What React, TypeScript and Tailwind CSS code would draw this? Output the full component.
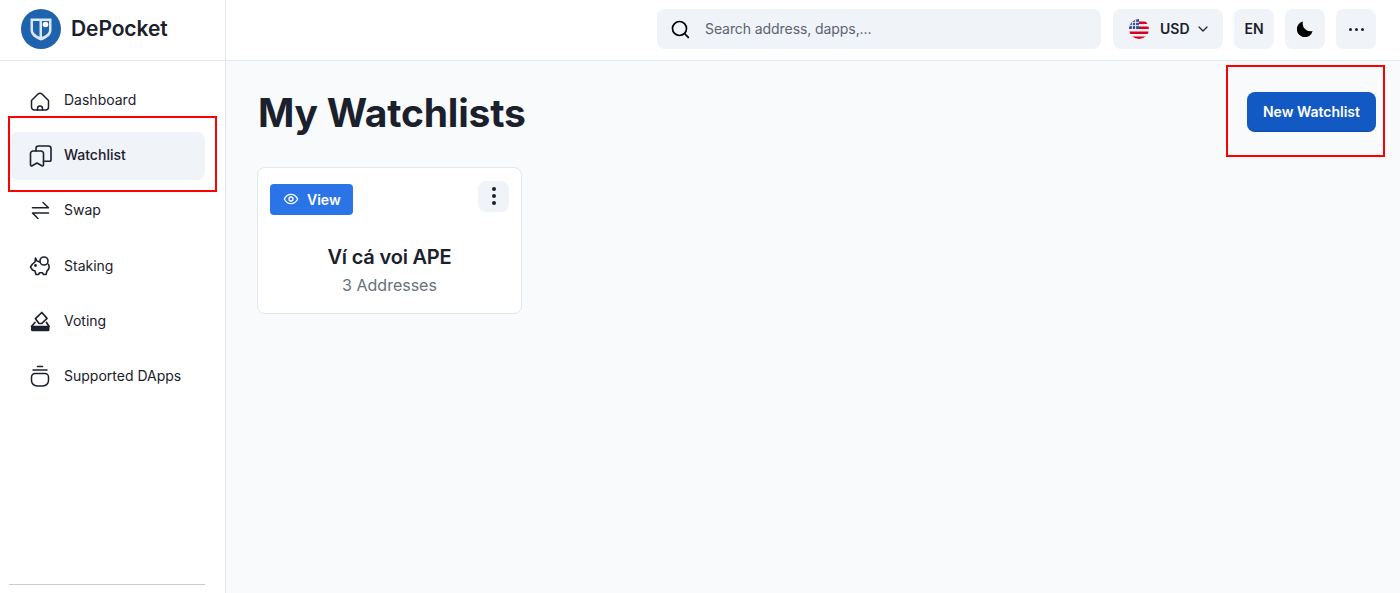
const navItems = [
  { label: "Dashboard", icon: <HomeIcon /> },
  { label: "Watchlist", icon: <BookmarksIcon />, active: true },
  { label: "Swap", icon: <SwapIcon /> },
  { label: "Staking", icon: <PiggyIcon /> },
  { label: "Voting", icon: <VoteIcon /> },
  { label: "Supported DApps", icon: <DappIcon /> },
];

function HomeIcon() {
  return (
    <svg width="24" height="24" viewBox="0 0 24 24" fill="none" stroke="#1a202c" strokeWidth="1.5" strokeLinejoin="round" strokeLinecap="round">
      <path d="M3.500 11.500 10 5a2.800 2.800 0 0 1 4 0l6.500 6.500v6.500a3 3 0 0 1-3 3h-11a3 3 0 0 1-3-3Z" />
      <path d="M9.500 21v-1.500a2.500 2.500 0 0 1 5 0V21" />
    </svg>
  );
}

function BookmarksIcon() {
  return (
    <svg width="24" height="24" viewBox="0 0 24 24" fill="none" stroke="#1a202c" strokeWidth="1.6" strokeLinejoin="round" strokeLinecap="round">
      <path d="M2.500 9.500A2.500 2.500 0 0 1 5 7h8a2.500 2.500 0 0 1 2.500 2.500v11.300c0 1-.9 1.500-1.700 1l-4.800-2.800-4.800 2.800c-.8.5-1.700 0-1.700-1Z" />
      <path d="M8 7V4.500A2.500 2.500 0 0 1 10.500 2h10a2.500 2.500 0 0 1 2.500 2.500v11c0 1-.8 1.800-1.700 1.800h-5.800" />
    </svg>
  );
}

function SwapIcon() {
  return (
    <svg width="24" height="24" viewBox="0 0 24 24" fill="none" stroke="#1a202c" strokeWidth="1.5" strokeLinecap="round" strokeLinejoin="round">
      <path d="M4.500 8.700h16L15 3.500" />
      <path d="M20.500 14H4.500l5.500 5.500" />
    </svg>
  );
}

function PiggyIcon() {
  return (
    <svg width="24" height="24" viewBox="0 0 24 24" fill="none" stroke="#1a202c" strokeWidth="1.600" strokeLinecap="round" strokeLinejoin="round">
      <circle cx="16" cy="7" r="4" />
      <path d="M12 8 9 7 7.500 4 7 8l-2.500 2-2 3 2 3 2.500 1 1 3.500h2.500l1-1.700h3l1 1.700H18l1-3.500c2-1.500 2.700-4 1.500-6.700" />
      <circle cx="7.500" cy="11.500" r=".6" fill="#1a202c" />
    </svg>
  );
}

function VoteIcon() {
  return (
    <svg width="24" height="24" viewBox="0 0 24 24" fill="none">
      <path d="M13.800 3.500 19 9.300l-5.200 5.200H11L7.500 9.700Z" stroke="#1a202c" strokeWidth="1.700" strokeLinejoin="round" strokeLinecap="round" />
      <path d="M7 13.500 3.500 17.500M18.500 13.500 21 17.500" stroke="#1a202c" strokeWidth="1.700" strokeLinecap="round" />
      <path d="M3 16.800h18.500v4a1.500 1.500 0 0 1-1.500 1.500H4.500A1.500 1.500 0 0 1 3 20.800Z" fill="#1a202c" />
    </svg>
  );
}

function DappIcon() {
  return (
    <svg width="24" height="24" viewBox="0 0 24 24" fill="none" stroke="#1a202c" strokeWidth="1.500" strokeLinecap="round" strokeLinejoin="round">
      <path d="M9.500 2.500h5" />
      <path d="M5 6h14" />
      <path d="M7 9.500h10a3.500 3.500 0 0 1 3.500 3.500v3.500a5.500 5.500 0 0 1-5.500 5.500H9a5.500 5.500 0 0 1-5.500-5.500V13A3.500 3.500 0 0 1 7 9.500Z" />
    </svg>
  );
}

function Logo() {
  return (
    <svg width="40" height="40" viewBox="0 0 40 40">
      <circle cx="20" cy="20" r="20" fill="#1f62ad" />
      <path d="M9.500 9.500h21v11.500c0 5-4.500 8.500-10.500 10.500-6-2-10.500-5.500-10.500-10.500Z" fill="#dce8f5" />
      <path d="M12 12h6.500v15.800c-3.800-1.600-6.500-4-6.500-7Z" fill="#1f62ad" />
      <path d="M21 12h7v9c0 3-2.800 5.300-7 6.800Z" fill="#1f62ad" />
      <circle cx="24.500" cy="15.500" r="2.800" fill="#ffffff" />
    </svg>
  );
}

function Flag() {
  return (
    <svg width="20" height="20" viewBox="0 0 20 20">
      <defs>
        <clipPath id="flag-clip">
          <circle cx="10" cy="10" r="10" />
        </clipPath>
      </defs>
      <g clipPath="url(#flag-clip)">
        <rect width="20" height="20" fill="#f0f0f0" />
        <rect y="2.500" width="20" height="2.500" fill="#d80027" />
        <rect y="7.500" width="20" height="2.500" fill="#d80027" />
        <rect y="12.500" width="20" height="2.500" fill="#d80027" />
        <rect y="17.500" width="20" height="2.500" fill="#d80027" />
        <rect width="10" height="10" fill="#2c4fa3" />
        <path d="M3.300 0v10M6.600 0v10M0 3.300h10M0 6.600h10" stroke="#f0f0f0" strokeWidth="1" />
      </g>
    </svg>
  );
}

export default function App() {
  return (
    <div className="relative flex h-[593px] w-[1400px] overflow-hidden bg-[#f8fafc] font-['Inter',sans-serif] text-[#1a202c]">
      <aside className="flex w-[226px] shrink-0 flex-col border-r border-[#e2e8f0] bg-white">
        <div className="flex h-[61px] shrink-0 items-center gap-[10px] border-b border-[#e2e8f0] pl-[21px] pb-[2px]">
          <Logo />
          <span className="text-[21px] font-semibold tracking-[-0.1px] text-[#1a202c]">DePocket</span>
        </div>
        <nav className="flex flex-col gap-[7.2px] pl-[10px] pr-[20px] pt-[15.5px]">
          {navItems.map((item) => (
            <div
              key={item.label}
              className={`flex h-[48px] items-center gap-[12px] rounded-lg pl-[18px] text-[14px] ${item.active ? "bg-[#f0f3f8] font-medium" : "text-[#1a202c]"}`}
            >
              {item.icon}
              <span className="pb-[2px]">{item.label}</span>
            </div>
          ))}
        </nav>
        <div className="mx-[9px] mt-auto mb-[8px] w-[196px] border-t border-[#cbcbd6]" />
      </aside>

      <div className="flex min-w-0 flex-1 flex-col">
        <header className="flex h-[61px] shrink-0 items-center justify-end border-b border-[#e2e8f0] bg-white pr-[24px] pb-[2px]">
          <div className="flex h-[40px] w-[444px] items-center gap-[15px] rounded-lg bg-[#f0f3f8] pl-[13px]">
            <svg width="20" height="20" viewBox="0 0 20 20" fill="none" stroke="#000" strokeWidth="1.700" strokeLinecap="round">
              <circle cx="9.500" cy="9.500" r="7" />
              <path d="m15 15 3.300 3.300" />
            </svg>
            <span className="pb-[1px] text-[14px] tracking-[-0.08px] text-[#5b6472]">Search address, dapps,...</span>
          </div>
          <div className="ml-[12px] flex h-[40px] w-[110px] items-center rounded-lg bg-[#f0f3f8] pl-[16px] text-[14px] font-semibold text-[#1a202c]">
            <Flag />
            <span className="ml-[11px] pb-[1px]">USD</span>
            <svg className="ml-[8px]" width="10" height="6" viewBox="0 0 10 6" fill="none" stroke="#1a202c" strokeWidth="1.200" strokeLinecap="round" strokeLinejoin="round">
              <path d="m1 1 4 4 4-4" />
            </svg>
          </div>
          <div className="ml-[11px] flex h-[40px] w-[40px] items-center justify-center rounded-lg bg-[#f0f3f8] pb-[2px] text-[14px] font-semibold">EN</div>
          <div className="ml-[11px] flex h-[40px] w-[40px] items-center justify-center rounded-lg bg-[#f0f3f8]">
            <svg width="16" height="16" viewBox="0 0 16 16" fill="#000">
              <path d="M6 .4a7.800 7.800 0 0 0 9.600 9.600A8 8 0 1 1 6 .4Z" />
            </svg>
          </div>
          <div className="ml-[11px] flex h-[40px] w-[40px] items-center justify-center gap-[3px] rounded-lg bg-[#f0f3f8]">
            <span className="h-[3px] w-[3px] rounded-full bg-[#1a202c]" />
            <span className="h-[3px] w-[3px] rounded-full bg-[#1a202c]" />
            <span className="h-[3px] w-[3px] rounded-full bg-[#1a202c]" />
          </div>
        </header>

        <main className="flex flex-col pr-[24px] pl-[31px]">
          <div className="flex h-[106px] shrink-0 items-center justify-between pb-[5px]">
            <h1 className="pt-[3px] pl-[1px] text-[39px] font-bold tracking-[-0.2px] text-[#1a202c]">My Watchlists</h1>
            <button className="h-[40px] w-[129px] rounded-lg border-b border-[#0f4ea8] bg-[#1259c3] text-[14px] font-semibold text-white">New Watchlist</button>
          </div>
          <div className="h-[147px] w-[265px] rounded-lg border border-[#e2e8f0] bg-white">
            <div className="flex items-start justify-between px-[12px] pt-[13px]">
              <button className="mt-[3px] flex h-[31px] w-[83px] items-center gap-[8px] rounded-[4px] bg-[#2b74e8] pb-[1px] pl-[13px] text-[14px] font-semibold text-white">
                <svg width="16" height="16" viewBox="0 0 24 24" fill="none" stroke="#fff" strokeWidth="2" strokeLinecap="round" strokeLinejoin="round">
                  <path d="M2 12s3.600-7 10-7 10 7 10 7-3.600 7-10 7-10-7-10-7Z" />
                  <circle cx="12" cy="12" r="3" />
                </svg>
                View
              </button>
              <div className="flex h-[31px] w-[31px] flex-col items-center justify-center gap-[3px] rounded-lg bg-[#f0f3f8] pb-[1px]">
                <span className="h-[4px] w-[4px] rounded-full bg-[#1a202c]" />
                <span className="h-[4px] w-[4px] rounded-full bg-[#1a202c]" />
                <span className="h-[4px] w-[4px] rounded-full bg-[#1a202c]" />
              </div>
            </div>
            <div className="mt-[27px] text-center">
              <div className="text-[20px] leading-[30px] font-semibold tracking-[-0.2px] text-[#1a202c]">Ví cá voi APE</div>
              <div className="mt-[1px] text-[16px] leading-[24px] text-[#68707c]">3 Addresses</div>
            </div>
          </div>
        </main>
      </div>

      {/* red annotation boxes drawn over the screenshot */}
      <div className="absolute top-[116px] left-[8px] h-[76px] w-[209px] border-2 border-[#ff0000]" />
      <div className="absolute top-[65px] left-[1226px] h-[92px] w-[159px] border-2 border-[#ff0000]" />
    </div>
  );
}
